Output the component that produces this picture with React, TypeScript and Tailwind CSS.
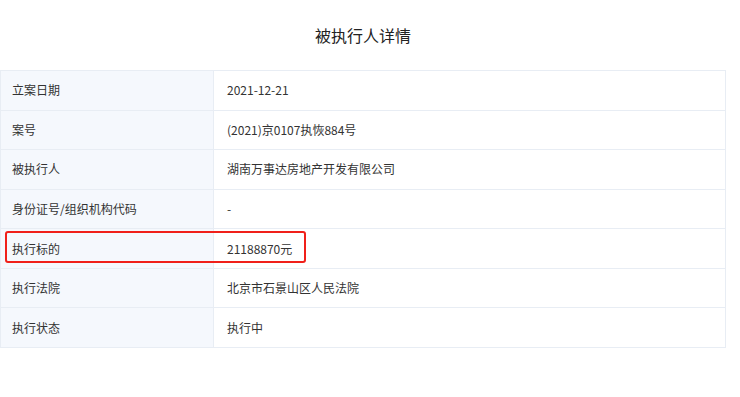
import React from "react";

const rows: [string, string][] = [
  ["立案日期", "2021-12-21"],
  ["案号", "(2021)京0107执恢884号"],
  ["被执行人", "湖南万事达房地产开发有限公司"],
  ["身份证号/组织机构代码", "-"],
  ["执行标的", "21188870元"],
  ["执行法院", "北京市石景山区人民法院"],
  ["执行状态", "执行中"],
];

export default function App() {
  return (
    <div
      className="w-[740px] h-[397px] bg-white text-[#333] relative"
      style={{ fontFamily: '"Noto Sans CJK SC", "Noto Sans", sans-serif' }}
    >
      <div className="w-[726px] h-[70px] flex items-center justify-center pb-[1px]">
        <span className="text-[16px] text-[#222]">被执行人详情</span>
      </div>
      <div className="w-[726px] h-[278px] border border-[#e8edf4] flex flex-col">
        {rows.map(([k, v], i) => (
          <div
            key={k}
            className={`flex flex-1 ${i > 0 ? "border-t border-[#e8edf4]" : ""}`}
          >
            <div className="w-[213px] bg-[#f5f8fd] border-r border-[#e8edf4] flex items-center pl-[11px] text-[12px]">
              {k}
            </div>
            <div className="flex-1 flex items-center pl-[13px] text-[12px]">{v}</div>
          </div>
        ))}
      </div>
      <div className="absolute left-[5px] top-[231px] w-[301px] h-[32px] border-2 border-[#f0201a] rounded-[3px]" />
    </div>
  );
}
